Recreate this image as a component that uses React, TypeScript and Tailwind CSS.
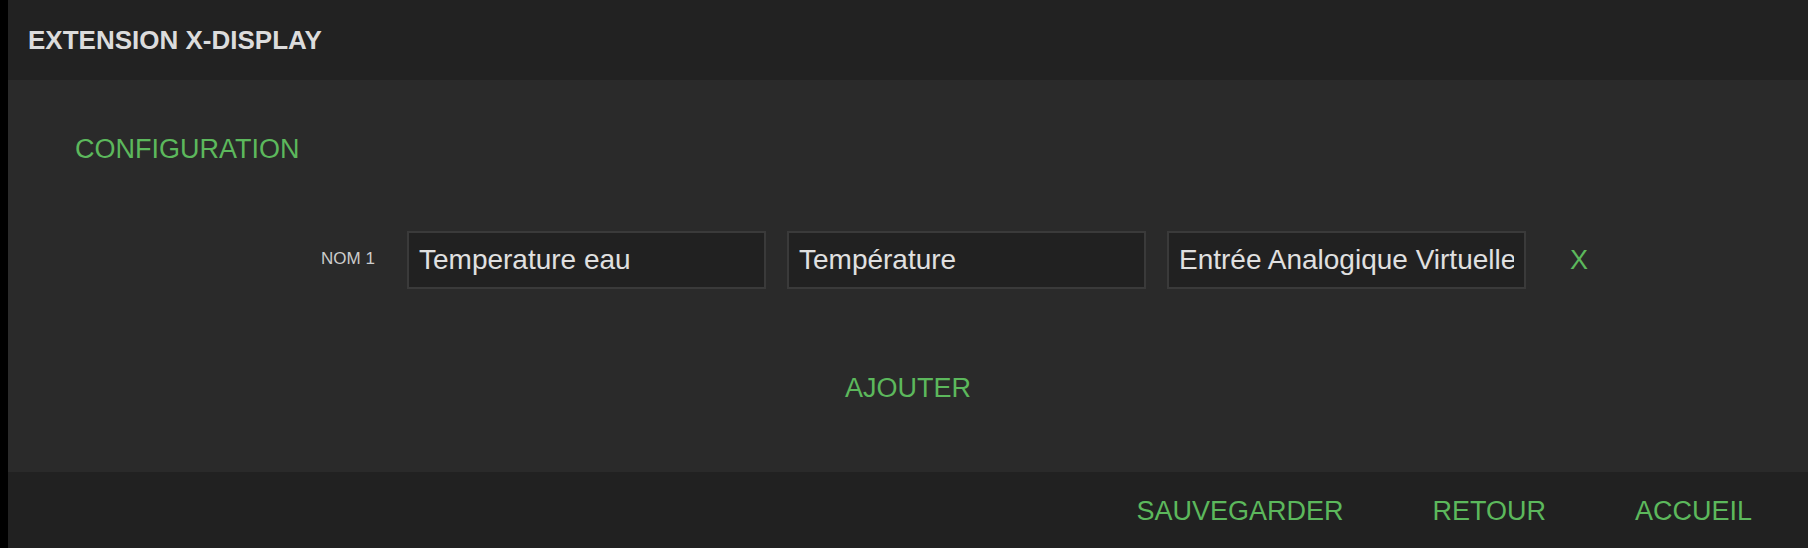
import React from "react";

const font = { fontFamily: '"Liberation Sans", Helvetica, Arial, sans-serif' };

export default function App() {
  const fields = ["Temperature eau", "Température", "Entrée Analogique Virtuelle"];
  return (
    <div
      className="w-[1808px] h-[548px] bg-black pl-[8px] flex overflow-hidden"
      style={font}
    >
      <div className="flex-1 flex flex-col">
        <div className="h-[80px] shrink-0 bg-[#222222] flex items-center pl-[20px]">
          <span className="text-[26px] leading-none font-bold text-[#dcdcdc]">
            EXTENSION X-DISPLAY
          </span>
        </div>
        <div className="flex-1 bg-[#2a2a2a] flex flex-col pt-[56px]">
          <div className="pl-[67px] text-[27px] leading-none text-[#5cb85c]">
            CONFIGURATION
          </div>
          <div className="mt-[68px] h-[58px] flex items-center pl-[313px]">
            <div className="w-[86px] shrink-0 text-[17px] leading-none text-[#cccccc] mb-[4px]">
              NOM 1
            </div>
            <div className="flex gap-[21px]">
              {fields.map((f) => (
                <input
                  key={f}
                  readOnly
                  value={f}
                  className="w-[359px] h-[58px] border-2 border-[#3a3a3a] bg-[#212121] px-[10px] text-[28px] text-[#e0e0e0] outline-none"
                  style={font}
                />
              ))}
            </div>
            <div className="ml-[44px] text-[27px] leading-none text-[#5cb85c]">X</div>
          </div>
          <div className="mt-[86px] text-center text-[27px] leading-none text-[#5cb85c]">
            AJOUTER
          </div>
        </div>
        <div className="h-[76px] shrink-0 bg-[#212121] flex items-center justify-end gap-[89px] pr-[56px] pt-[2px]">
          <span className="text-[27px] leading-none text-[#5cb85c]">SAUVEGARDER</span>
          <span className="text-[27px] leading-none text-[#5cb85c]">RETOUR</span>
          <span className="text-[27px] leading-none text-[#5cb85c]">ACCUEIL</span>
        </div>
      </div>
    </div>
  );
}
